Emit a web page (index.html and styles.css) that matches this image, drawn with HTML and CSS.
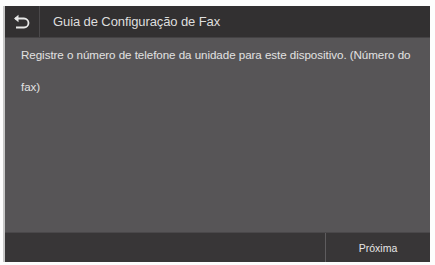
FILE: index.html
```html
<!DOCTYPE html>
<html lang="pt">
<head>
<meta charset="utf-8">
<link rel="stylesheet" href="styles.css">
</head>
<body>
<div class="screen">
  <div class="header">
    <div class="back">
      <svg width="18" height="16" viewBox="0 0 18 16">
        <path d="M2 4.5 H11 A4.5 4.5 0 0 1 11 13.5 H3" fill="none" stroke="#e8e8e8" stroke-width="1.8"/>
        <path d="M1 4.5 L5.5 0.8 L5.5 8.2 Z" fill="#e8e8e8"/>
      </svg>
    </div>
    <div class="title">Guia de Configuração de Fax</div>
  </div>
  <div class="body">
    <p class="msg">Registre o número de telefone da unidade para este dispositivo. (Número do fax)</p>
  </div>
  <div class="footer">
    <div class="spacer"></div>
    <div class="next">Próxima</div>
  </div>
</div>
</body>
</html>
```
FILE: styles.css
```css
html, body {
  margin: 0;
  padding: 0;
  background: #fdfdfd;
}
body {
  width: 435px;
  height: 265px;
  overflow: hidden;
  font-family: "Liberation Sans", Arial, sans-serif;
}
.screen {
  margin: 6px 5px 0 5px;
  width: 425px;
  height: 256px;
  display: flex;
  flex-direction: column;
  background: #575557;
  box-shadow: -2px 0 0 #c8c8c8;
}
.header {
  height: 31px;
  background: #323031;
  display: flex;
  align-items: center;
  border-bottom: 1px solid #444244;
  flex: none;
}
.back {
  width: 35px;
  height: 31px;
  display: flex;
  align-items: center;
  justify-content: center;
  border-right: 1px solid #4a484a;
  box-sizing: border-box;
}
.title {
  color: #dedede;
  font-size: 13px;
  padding-left: 13px;
  letter-spacing: -0.1px;
}
.body {
  flex: 1;
  padding: 1px 12px 0 16px;
}
.msg {
  margin: 0;
  color: #e2e2e2;
  font-size: 11.6px;
  line-height: 32px;
  letter-spacing: -0.05px;
}
.footer {
  height: 29px;
  flex: none;
  background: #383637;
  border-top: 1px solid #4a484a;
  display: flex;
}
.spacer {
  flex: 1;
  border-right: 1px solid #5e5c5e;
}
.next {
  width: 104px;
  display: flex;
  align-items: center;
  justify-content: center;
  color: #e6e6e6;
  font-size: 10.5px;
}
```
